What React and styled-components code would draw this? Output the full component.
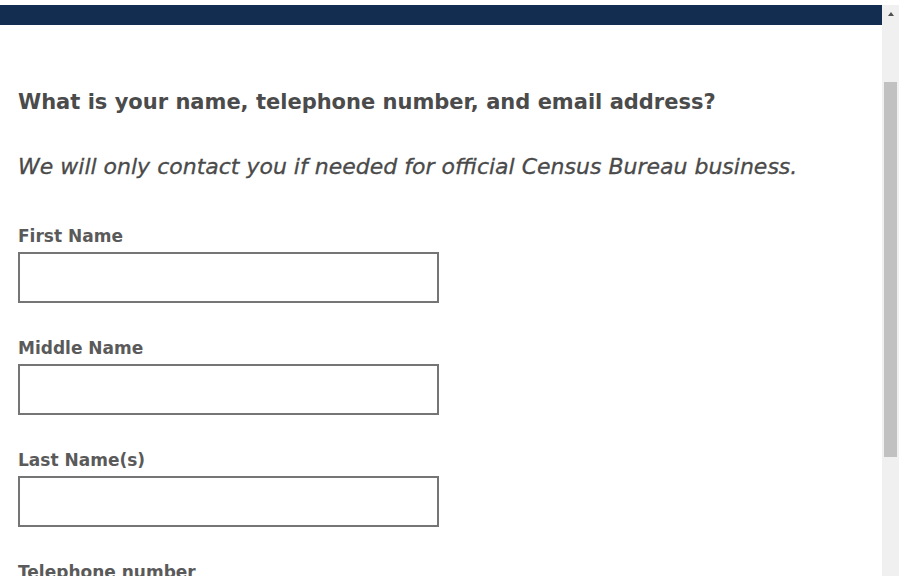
import React from 'react';
import styled, { createGlobalStyle } from 'styled-components';

const GlobalStyle = createGlobalStyle`
  html, body {
    margin: 0;
    padding: 0;
    background: #ffffff;
    overflow: hidden;
  }
  body {
    font-family: "DejaVu Sans", "Liberation Sans", sans-serif;
  }
`;

const Frame = styled.div`
  display: flex;
  width: 899px;
  height: 571px;
  margin-top: 5px;
`;

const Page = styled.div`
  flex: 1;
  display: flex;
  flex-direction: column;
  overflow: hidden;
`;

const TopBar = styled.div`
  height: 20px;
  flex-shrink: 0;
  background: #132d50;
`;

const Body = styled.div`
  padding: 62px 18px 0;
  display: flex;
  flex-direction: column;
`;

const Question = styled.h2`
  margin: 0;
  font-size: 21px;
  line-height: 30px;
  font-weight: 700;
  color: #4b4b4b;
`;

const Note = styled.p`
  margin: 35px 0 0;
  font-size: 22px;
  line-height: 30px;
  font-style: italic;
  font-weight: 400;
  color: #4a4a4a;
  -webkit-text-stroke: 0.3px #4a4a4a;
`;

const Fields = styled.div`
  display: flex;
  flex-direction: column;
  gap: 33px;
  margin-top: 42px;
`;

const Field = styled.label`
  display: flex;
  flex-direction: column;
  gap: 4px;
`;

const Label = styled.span`
  font-size: 17px;
  line-height: 24px;
  font-weight: 700;
  color: #5a5a5a;
`;

const TextBox = styled.input`
  box-sizing: border-box;
  width: 421px;
  height: 51px;
  border: 2px solid #757575;
  border-radius: 0;
  background: #fff;
  padding: 0 10px;
  font: inherit;
  outline: none;
`;

const Track = styled.div`
  width: 17px;
  flex-shrink: 0;
  background: #f0f0f0;
  display: flex;
  flex-direction: column;
  align-items: center;
`;

const Arrow = styled.div`
  width: 0;
  height: 0;
  margin-top: 7px;
  border-left: 3.5px solid transparent;
  border-right: 3.5px solid transparent;
  border-bottom: 4px solid #505050;
`;

const Thumb = styled.div`
  width: 13px;
  height: 375px;
  margin-top: 66px;
  background: #c1c1c1;
`;

const fields = ['First Name', 'Middle Name', 'Last Name(s)', 'Telephone number', 'Email address'];

function App() {
  return (
    <>
      <GlobalStyle />
      <Frame>
        <Page>
          <TopBar />
          <Body>
            <Question>What is your name, telephone number, and email address?</Question>
            <Note>We will only contact you if needed for official Census Bureau business.</Note>
            <Fields>
              {fields.map((name) => (
                <Field key={name}>
                  <Label>{name}</Label>
                  <TextBox type="text" />
                </Field>
              ))}
            </Fields>
          </Body>
        </Page>
        <Track>
          <Arrow />
          <Thumb />
        </Track>
      </Frame>
    </>
  );
}

export default App;
